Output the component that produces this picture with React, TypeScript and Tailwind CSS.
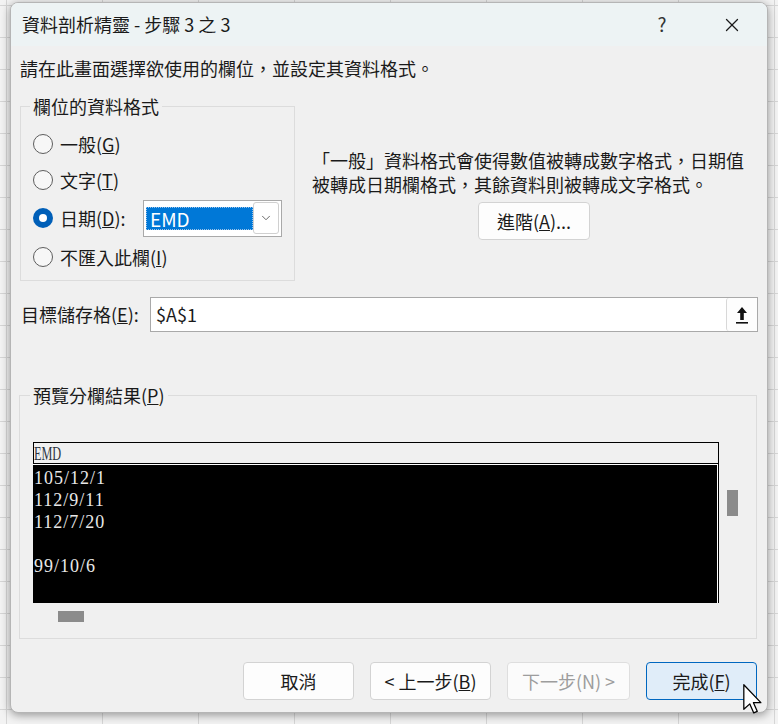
import { ChevronDown, X } from "lucide-react";

const font = "font-['Noto_Sans_CJK_TC','Noto_Sans',sans-serif]";

function Radio({ checked }: { checked?: boolean }) {
  return checked ? (
    <span className="w-[20px] h-[20px] rounded-full bg-[#005fb8] flex items-center justify-center shrink-0">
      <span className="w-[8px] h-[8px] rounded-full bg-white" />
    </span>
  ) : (
    <span className="w-[20px] h-[20px] rounded-full border-[1.5px] border-[#5d5d5d] bg-[#f7f7f7] shrink-0" />
  );
}

function Btn({ children, w, variant = "normal" }: { children: React.ReactNode; w: string; variant?: "normal" | "disabled" | "primary" }) {
  const cls =
    variant === "primary"
      ? "bg-[#e0edf9] border-[#0067c0] text-[#1a1a1a]"
      : variant === "disabled"
      ? "bg-[#fbfbfb] border-[#dedede] text-[#9d9d9d]"
      : "bg-[#fdfdfd] border-[#d3d3d3] text-[#1a1a1a]";
  return (
    <div className={`${w} h-[38px] rounded-[4px] border flex items-center justify-center text-[18px] whitespace-nowrap ${cls}`}>
      {children}
    </div>
  );
}

export default function App() {
  const rows = ["105/12/1", "112/9/11", "112/7/20", "", "99/10/6"];

  return (
    <div
      className={`relative w-[778px] h-[724px] overflow-hidden bg-[#f3f3f3] bg-[linear-gradient(to_bottom,#d6d6d6_1px,transparent_1px),linear-gradient(to_right,#d6d6d6_1px,transparent_1px)] bg-[size:96px_32px] bg-[position:6px_5px] pt-[2px] pl-[10px] ${font}`}
    >
      {/* Dialog */}
      <div className="w-[758px] h-[711px] rounded-[8px] overflow-hidden bg-[#f0f0f0] shadow-[0_2px_10px_rgba(0,0,0,0.4)] border border-[#b5b5b5] flex flex-col text-[#1a1a1a]">
        {/* Title bar */}
        <div className="h-[43px] shrink-0 bg-[#edf3f4] flex items-center">
          <span className="pl-[11px] text-[18px] flex-1">資料剖析精靈 - 步驟 3 之 3</span>
          <span className="w-[70px] h-full flex items-center justify-center text-[19px] text-[#333]">?</span>
          <span className="w-[70px] h-full flex items-center justify-center">
            <X className="w-[22px] h-[22px] text-[#1a1a1a]" strokeWidth={1.4} />
          </span>
        </div>

        {/* Body */}
        <div className="flex-1 flex flex-col px-[9px] text-[18px]">
          <p className="mt-[11px] leading-[23px]">請在此畫面選擇欲使用的欄位，並設定其資料格式。</p>

          <div className="mt-[15px] flex">
            <fieldset className="w-[275px] shrink-0 border border-[#dcdcdc] pl-[12px] pr-[2px] pb-[4px]">
              <legend className="ml-[-3px] px-[3px] leading-[22px]">欄位的資料格式</legend>
              <div className="pt-[9px] whitespace-nowrap">
                <div className="h-[36px] flex items-center gap-[7px]">
                  <Radio />
                  <span>一般(<span className="underline">G</span>)</span>
                </div>
                <div className="h-[36px] flex items-center gap-[7px]">
                  <Radio />
                  <span>文字(<span className="underline">T</span>)</span>
                </div>
                <div className="h-[40px] flex items-center gap-[7px]">
                  <Radio checked />
                  <span className="w-[76px] shrink-0">日期(<span className="underline">D</span>):</span>
                  <div className="w-[139px] shrink-0 h-[37px] border border-[#a9a9a9] bg-white flex items-center px-[2px]">
                    <div className="flex-1 h-[23px] bg-[#0078d7] border border-dotted border-[#9cc4ea] text-white text-[19px] leading-[21px] pl-[3px]">
                      EMD
                    </div>
                    <div className="w-[26px] h-[32px] bg-white border border-[#d0d0d0] rounded-[3px] flex items-center justify-center">
                      <ChevronDown className="w-[14px] h-[14px] text-[#555]" strokeWidth={1.5} />
                    </div>
                  </div>
                </div>
                <div className="h-[38px] flex items-center gap-[7px]">
                  <Radio />
                  <span>不匯入此欄(<span className="underline">I</span>)</span>
                </div>
              </div>
            </fieldset>

            <div className="flex-1 pl-[17px] pt-[53px]">
              <div className="w-[450px] whitespace-nowrap">
                <div className="h-[24px] leading-[24px]">「一般」資料格式會使得數值被轉成數字格式，日期值</div>
                <div className="h-[24px] leading-[24px]">被轉成日期欄格式，其餘資料則被轉成文字格式。</div>
              </div>
              <div className="mt-[6px] ml-[166px]">
                <Btn w="w-[112px]">
                  進階(<span className="underline">A</span>)...
                </Btn>
              </div>
            </div>
          </div>

          {/* Target cell */}
          <div className="mt-[16px] flex items-center">
            <span className="w-[130px] shrink-0 pl-[1px] whitespace-nowrap">
              目標儲存格(<span className="underline">E</span>):
            </span>
            <div className="flex-1 h-[35px] bg-white border border-[#a9a9a9] flex items-center">
              <span className="flex-1 pl-[5px] text-[18px]">$A$1</span>
              <div className="w-[31px] h-[33px] border-l border-[#d8d8d8] rounded-[3px] bg-[#fdfdfd] flex items-center justify-center">
                <svg width="14" height="18" viewBox="0 0 14 18">
                  <path d="M7 1 L12 7 L8.8 7 L8.8 14 L5.2 14 L5.2 7 L2 7 Z" fill="#111" />
                  <rect x="1" y="16" width="12" height="1.6" fill="#111" />
                </svg>
              </div>
            </div>
          </div>

          {/* Preview */}
          <fieldset className="mt-[52px] w-[738px] -ml-px border border-[#dcdcdc] pl-[13px] pb-[16px]">
            <legend className="ml-[-3px] px-[3px] leading-[22px]">
              預覽分欄結果(<span className="underline">P</span>)
            </legend>
            <div className="mt-[36px] flex">
              <div className="w-[686px]">
                <div className="h-[22px] border-t border-x border-b border-black bg-[#f0f0f0] flex items-end overflow-hidden">
                  <span className="font-['Liberation_Serif',serif] text-[18px] leading-[18px] text-[#2c3440] scale-x-[0.68] origin-left">EMD</span>
                </div>
                <div className="h-px bg-white border-r border-black" />
                <div className="h-[138px] flex">
                  <div className="flex-1 bg-black pt-[2px] pl-[1px] font-['Liberation_Serif',serif] text-[18px] leading-[22px] text-[#e8e8e8] tracking-[1px]">
                    {rows.map((r, i) => (
                      <div key={i} className="h-[22px]">{r}</div>
                    ))}
                  </div>
                  <div className="w-px bg-white" />
                  <div className="w-px bg-black" />
                </div>
                <div className="mt-[8px] ml-[25px] w-[26px] h-[11px] bg-[#8b8b8b]" />
              </div>
              <div className="ml-[8px] mt-[48px] w-[11px] h-[26px] bg-[#8b8b8b]" />
            </div>
          </fieldset>

          {/* Buttons */}
          <div className="mt-[23px] flex justify-end gap-[16px] pr-[1px]">
            <Btn w="w-[111px]">取消</Btn>
            <Btn w="w-[121px]">
              &lt; 上一步(<span className="underline">B</span>)
            </Btn>
            <Btn w="w-[123px]" variant="disabled">
              下一步(N) &gt;
            </Btn>
            <Btn w="w-[111px]" variant="primary">
              完成(<span className="underline">F</span>)
            </Btn>
          </div>
        </div>
      </div>

      {/* Mouse cursor */}
      <svg className="absolute left-[743px] top-[684px]" width="19" height="30" viewBox="0 0 12 19">
        <path d="M0.5 0.5 L0.5 16 L4.3 12.6 L6.8 18.3 L9 17.3 L6.6 11.8 L11.3 11.8 Z" fill="#fff" stroke="#000" strokeWidth="0.8" strokeLinejoin="round" />
      </svg>
    </div>
  );
}
